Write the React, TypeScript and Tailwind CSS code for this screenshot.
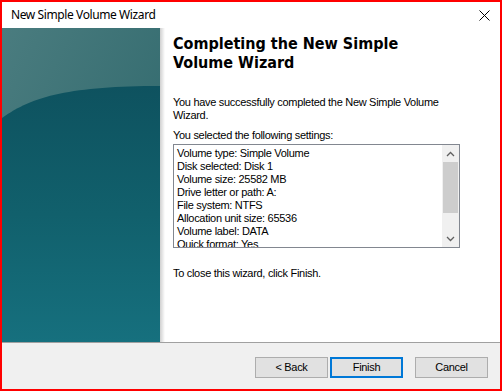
import React from "react";

const settings = [
  "Volume type: Simple Volume",
  "Disk selected: Disk 1",
  "Volume size: 25582 MB",
  "Drive letter or path: A:",
  "File system: NTFS",
  "Allocation unit size: 65536",
  "Volume label: DATA",
  "Quick format: Yes",
];

function SidePanel() {
  return (
    <svg width="158" height="314" viewBox="0 0 158 314" className="block shrink-0">
      <defs>
        <linearGradient id="top" x1="0" y1="0" x2="1" y2="1">
          <stop offset="0" stopColor="#4a7c7f" />
          <stop offset="1" stopColor="#2b6569" />
        </linearGradient>
        <linearGradient id="deep" x1="0" y1="0" x2="0" y2="1">
          <stop offset="0" stopColor="#0e525f" />
          <stop offset="0.5" stopColor="#11606c" />
          <stop offset="1" stopColor="#16707e" />
        </linearGradient>
      </defs>
      <rect width="158" height="314" fill="url(#top)" />
      <path d="M0,90 C30,68 70,58 158,58 L158,314 L0,314 Z" fill="url(#deep)" />
    </svg>
  );
}

function Button({ label, primary }: { label: string; primary?: boolean }) {
  return (
    <div
      className={
        "flex h-[21px] w-[73px] items-center justify-center bg-[#e1e1e1] text-[11px] tracking-[-0.3px] text-black " +
        (primary ? "border-2 border-[#0078d7]" : "border border-[#adadad]")
      }
    >
      {label}
    </div>
  );
}

export default function App() {
  return (
    <div className="h-[391px] w-[502px] bg-[#ff0000] p-[2px]" style={{ fontFamily: '"Liberation Sans", Arial, sans-serif' }}>
      <div className="flex h-full w-full flex-col bg-white">
        {/* title bar */}
        <div className="flex h-[26px] shrink-0 items-center justify-between pl-[9px] pr-[10px]">
          <span className="text-[12px] tracking-[-0.4px] text-black" style={{ fontFamily: '"Noto Sans", "Open Sans", sans-serif' }}>
            New Simple Volume Wizard
          </span>
          <svg width="11" height="11" viewBox="0 0 11 11">
            <path d="M0.5,0.5 L10.5,10.5 M10.5,0.5 L0.5,10.5" stroke="#000" strokeWidth="1" />
          </svg>
        </div>

        {/* body */}
        <div className="flex h-[314px] shrink-0">
          <SidePanel />
          <div className="w-[5px] shrink-0 bg-gradient-to-r from-[#d0d0d0] to-white" />
          <div className="flex flex-1 flex-col pl-[8px] pt-[6px] text-[11px] leading-[13px] tracking-[-0.3px] text-black">
            <h1
              className="text-[16px] font-bold leading-[19px] tracking-normal text-black"
              style={{ fontFamily: '"DejaVu Sans Condensed", "DejaVu Sans", Verdana, sans-serif', fontStretch: "condensed" }}
            >
              Completing the New Simple
              <br />
              Volume Wizard
            </h1>
            <p className="mt-[24px]">
              You have successfully completed the New Simple Volume
              <br />
              Wizard.
            </p>
            <p className="mt-[7px]">You selected the following settings:</p>
            <div className="mt-[2px] flex h-[104px] w-[287px] border border-[#828790] bg-white">
              <div className="flex-1 overflow-hidden pl-[3px] pt-[2px]">
                {settings.map((s) => (
                  <div key={s} className="h-[13px] whitespace-nowrap">
                    {s}
                  </div>
                ))}
              </div>
              <div className="flex w-[17px] flex-col bg-[#f0f0f0]">
                <div className="flex h-[17px] items-center justify-center">
                  <svg width="9" height="6" viewBox="0 0 9 6">
                    <path d="M1,5 L4.5,1.5 L8,5" fill="none" stroke="#606060" strokeWidth="1.3" />
                  </svg>
                </div>
                <div className="mx-[1px] h-[51px] bg-[#cdcdcd]" />
                <div className="flex-1" />
                <div className="flex h-[17px] items-center justify-center">
                  <svg width="9" height="6" viewBox="0 0 9 6">
                    <path d="M1,1 L4.5,4.5 L8,1" fill="none" stroke="#606060" strokeWidth="1.3" />
                  </svg>
                </div>
              </div>
            </div>
            <p className="mt-[19px]">To close this wizard, click Finish.</p>
          </div>
        </div>

        <div className="h-px shrink-0 bg-[#a0a0a0]" />

        {/* footer */}
        <div className="flex flex-1 items-start justify-end bg-[#f0f0f0] pr-[12px] pt-[14px]">
          <Button label="< Back" />
          <div className="w-[2px]" />
          <Button label="Finish" primary />
          <div className="w-[12px]" />
          <Button label="Cancel" />
        </div>
      </div>
    </div>
  );
}
